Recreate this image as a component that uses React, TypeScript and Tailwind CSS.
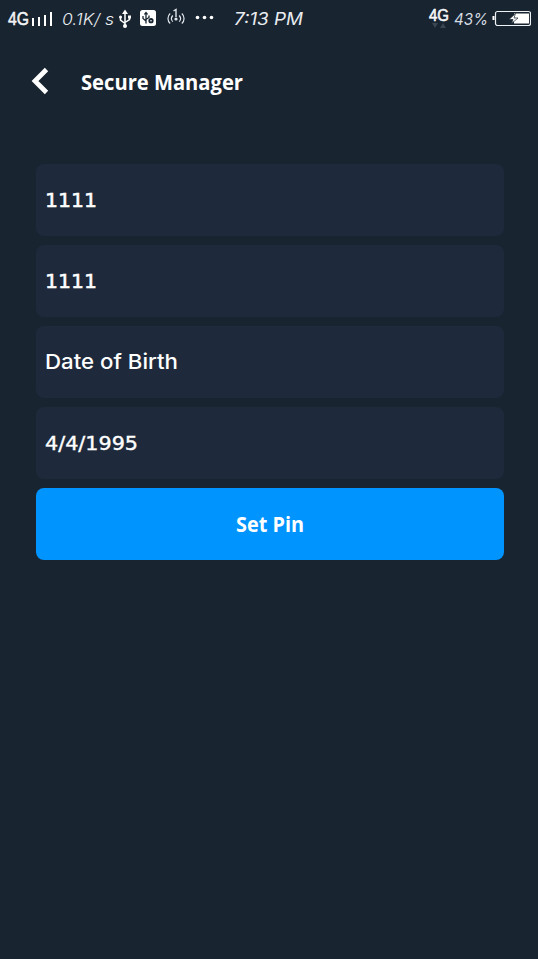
import React from 'react';

type FitProps = { children: string; width: number; className: string; slant?: boolean };

// Single line of text fitted to a fixed advance width.
function Fit({ children, width, className, slant }: FitProps) {
  return (
    <svg width={width} height="32" className={`block shrink-0 overflow-visible ${className}`} aria-label={children}>
      <text x="0" y="23" fill="currentColor" textLength={width} lengthAdjust="spacingAndGlyphs" fontStyle={slant ? 'italic' : 'normal'}>
        {children}
      </text>
    </svg>
  );
}

function Usb() {
  return (
    <svg width="14" height="20" viewBox="0 0 14 20" fill="none" stroke="white" strokeWidth="1.5">
      <path d="M7 3v14M2.5 8v3.2L7 14.5M11.5 7v3.5L7 13.5" />
      <path d="M7 .5 10 5H4z" fill="white" stroke="none" />
      <circle cx="7" cy="17" r="2" fill="white" stroke="none" />
      <circle cx="2.5" cy="8" r="1.5" fill="white" stroke="none" />
      <path d="M10 6.5h3v3h-3z" fill="white" stroke="none" />
    </svg>
  );
}

function UsbDebug() {
  return (
    <svg width="16" height="16" viewBox="0 0 16 16" fill="none">
      <rect width="16" height="16" rx="2.5" fill="white" />
      <g stroke="#182431" strokeWidth="1.3">
        <path d="M6 3v10.5M3 6v2.5L6 11M9 5.5v2L6 9.5" />
        <path d="m4.5 4.5 1.5-2 1.5 2" />
        <circle cx="11" cy="10.7" r="1.7" strokeWidth="1.8" />
      </g>
    </svg>
  );
}

function Hotspot() {
  return (
    <svg width="18" height="20" viewBox="0 0 18 20" fill="none" stroke="#e1e6eb" strokeWidth="1.2">
      <path d="M3.2 6.5c-3 2.6-3 7.4 0 10M14.8 6.5c3 2.6 3 7.4 0 10M5.8 8.5c-1.7 2-1.7 4.5 0 6.2M12.2 8.5c1.7 2 1.7 4.5 0 6.2" />
      <path d="m6.5 4 2.5-1.5V10" strokeWidth="1.4" />
      <circle cx="9" cy="12" r="1.6" fill="#e1e6eb" stroke="none" />
    </svg>
  );
}

function Battery() {
  return (
    <svg width="39" height="16" viewBox="0 0 39 16">
      <path d="M1.5 6v4" stroke="white" strokeWidth="2" />
      <rect x="3.5" y="1.5" width="35" height="14" rx="2" fill="none" stroke="#eef2f5" strokeWidth="1.2" />
      <path d="M22 3.5h15v10H22z" fill="white" />
      <path d="m23.5 3.5-6.5 6h4l-1.5 4 6.5-5.5h-4z" fill="white" stroke="#182431" strokeWidth=".7" />
    </svg>
  );
}

function StatusBar() {
  return (
    <header className="flex h-9 items-start text-[#e9edf1]">
      <div className="flex w-full items-start pt-0.5 pl-2">
        <Fit width={21} className="font-['Liberation_Sans'] text-[17.5px] [stroke:white] [stroke-width:.5px]">4G</Fit>
        <svg width="22" height="16" className="mt-[9px] ml-[2px]" fill="white">
          <path d="M1 7h2v8H1zM7 6h2v9H7zM13 4h2v11h-2zM19 1h2v14h-2z" />
        </svg>
        <div className="ml-[9px]"><Fit width={52} slant className="font-[Inter] text-[16px] font-light">0.1K/ s</Fit></div>
        <div className="mt-[7px] ml-[4px]"><Usb /></div>
        <div className="mt-[8px] ml-[8px]"><UsbDebug /></div>
        <div className="mt-[5px] ml-[11px]"><Hotspot /></div>
        <svg width="19" height="5" className="mt-[13px] ml-[10px]" fill="white">
          <circle cx="2.5" cy="2.5" r="1.8" /><circle cx="9.5" cy="2.5" r="1.8" /><circle cx="16.5" cy="2.5" r="1.8" />
        </svg>
        <div className="ml-[20px]"><Fit width={69} slant className="font-[Inter] text-[17px]">7:13 PM</Fit></div>
        <div className="mr-[5px] ml-auto -mt-[4px] h-8">
          <Fit width={20} className="font-['Liberation_Sans'] text-[17px] [stroke:white] [stroke-width:.6px]">4G</Fit>
          <svg width="16" height="6" className="-mt-[7px] ml-[3px]" fill="#3a4651"><path d="M0 0h6L3 5zM8 5h6L11 0z" /></svg>
        </div>
        <Fit width={34} slant className="font-[Inter] text-[16px] text-[#d5dce2]">43%</Fit>
        <div className="mt-[8px] mr-[7px] ml-[4px]"><Battery /></div>
      </div>
    </header>
  );
}

const rows = [
  { text: '1111', width: 52, className: "font-['DejaVu_Sans'] text-[20px] [stroke:white] [stroke-width:.55px]" },
  { text: '1111', width: 52, className: "font-['DejaVu_Sans'] text-[20px] [stroke:white] [stroke-width:.55px]" },
  { text: 'Date of Birth', width: 133, className: 'font-[Inter] text-[20.5px] font-medium' },
  { text: '4/4/1995', width: 93, className: "font-['DejaVu_Sans'] text-[20px] [stroke:white] [stroke-width:.4px]" },
];

export default function App() {
  return (
    <main className="h-[959px] w-full overflow-hidden bg-[#182430] font-['Open_Sans'] text-white">
      <StatusBar />
      <div className="flex h-32 items-start pt-[31px] pl-[31px]">
        <svg width="19" height="28" viewBox="0 0 19 28" fill="none" stroke="white" strokeWidth="4.8" aria-label="Back">
          <path d="M15.5 2.5 4 14l11.5 11.5" />
        </svg>
        <div className="ml-[31px]"><Fit width={162} className="text-[22px] font-bold">Secure Manager</Fit></div>
      </div>
      <div className="mr-[34px] ml-9 flex flex-col gap-[9px]">
        {rows.map((row, i) => (
          <div key={i} className="flex h-[72px] items-start rounded-lg bg-[#1e2a3b] pt-5 pl-[9px]">
            <Fit width={row.width} className={row.className}>{row.text}</Fit>
          </div>
        ))}
        <button className="flex h-[72px] items-start justify-center rounded-lg bg-[#0094ff] pt-[21px]">
          <Fit width={68} className="text-[22px] font-bold">Set Pin</Fit>
        </button>
      </div>
    </main>
  );
}
